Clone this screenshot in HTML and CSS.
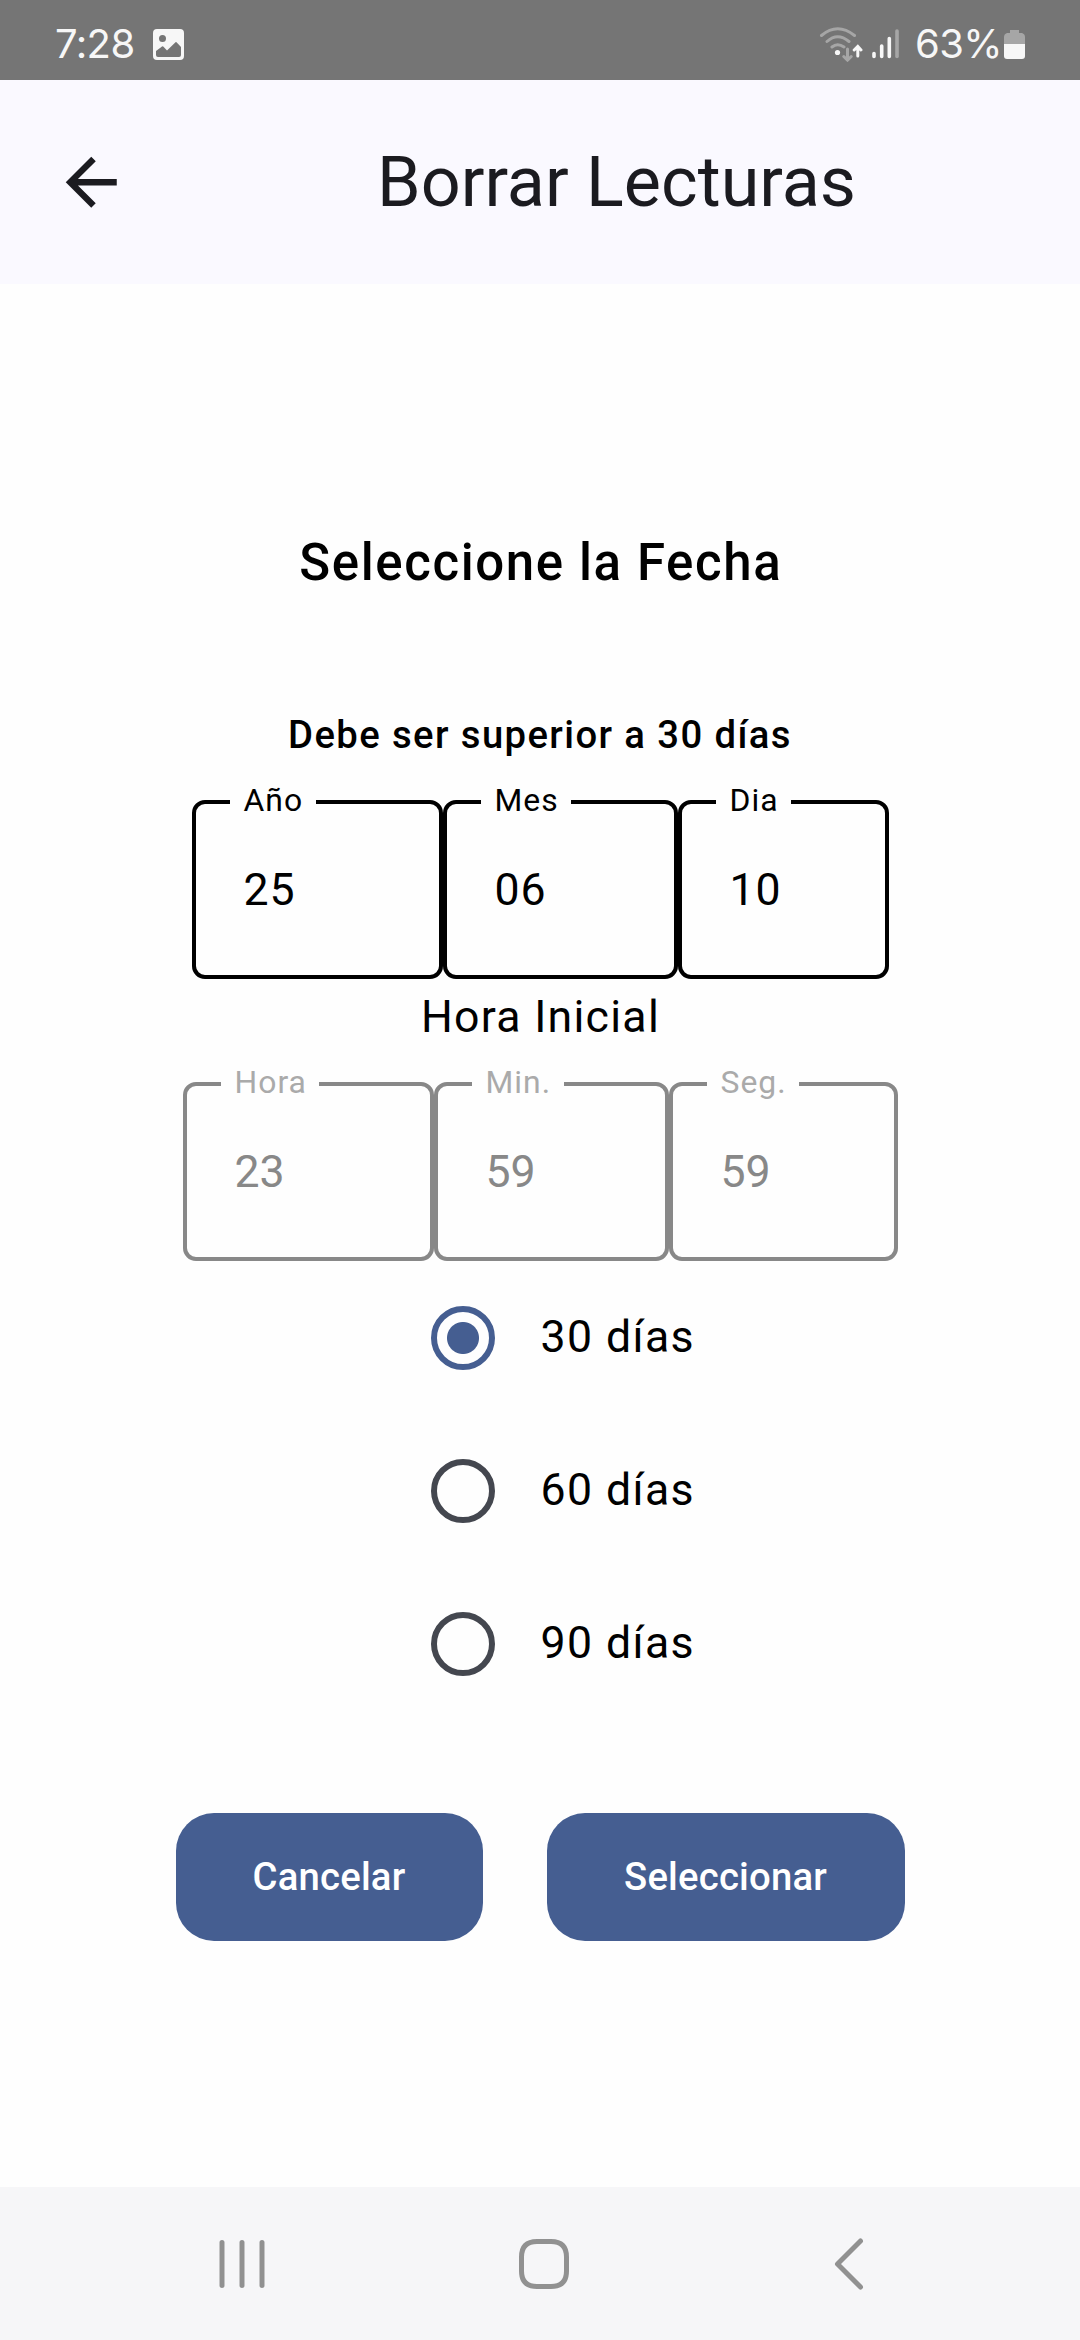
FILE: index.html
```html
<!DOCTYPE html>
<html lang="es">
<head>
<meta charset="utf-8">
<title>Borrar Lecturas</title>
<link rel="stylesheet" href="styles.css">
</head>
<body>
<div class="status">
  <div class="status-left">
    <span class="time">7:28</span>
    <svg width="31" height="31" viewBox="0 0 31 31"><path fill="#f7f7f7" fill-rule="evenodd" d="M4 0H27Q31 0 31 4V27Q31 31 27 31H4Q0 31 0 27V4Q0 0 4 0ZM9.500 6A3.500 3.500 0 1 0 9.500 13A3.500 3.500 0 1 0 9.500 6ZM3 22V26Q3 28 5 28H26Q28 28 28 26V18L23.500 13.300Q23 12.900 22.500 13.300L14 21.500L10.500 17.800Q9.800 17 9 17.600Z"/></svg>
  </div>
  <div class="status-right">
    <svg class="wifi" width="44" height="36" viewBox="0 0 44 36" fill="none" stroke-linecap="round">
      <g stroke="#a6a6a6" stroke-width="3"><path d="M2.500 9.500Q18.500-4 35.500 9.500M8 15.500Q18.500 6 30 15.500M13 21Q18.500 16.500 25 21M28.500 23V34M24.800 30.500L28.500 34.200L32.200 30.500"/></g>
      <circle cx="18.500" cy="26.500" r="2.600" fill="#f7f7f7"/>
      <path stroke="#f7f7f7" stroke-width="3" d="M38.800 30V21M35.200 24L38.800 20.500L42 24"/>
    </svg>
    <svg class="signal" width="27" height="30" viewBox="0 0 27 30" stroke-width="3.600" stroke-linecap="round"><path stroke="#f7f7f7" d="M2 24.500V27.500M9.700 17V27.500M17.300 9.500V27.500"/><path stroke="#a6a6a6" d="M25 2V27.500"/></svg>
    <span class="percent">63%</span>
    <svg class="battery" width="21" height="29" viewBox="0 0 21 29"><path fill="#a6a6a6" d="M6 0H15V3H18Q21 4 21 7V14H0V7Q0 4 3 3H6Z"/><path fill="#f7f7f7" d="M0 14H21V26Q21 29 18 29H3Q0 29 0 26Z"/></svg>
  </div>
</div>
<header class="appbar">
  <svg class="back" viewBox="0 0 24 24"><path fill="#1b1b20" d="M20 11H7.830L13.420 5.410 12 4 4 12 12 20 13.410 18.590 7.830 13H20Z"/></svg>
  <h1 class="title">Borrar Lecturas</h1>
</header>
<main class="content">
  <h2 class="heading">Seleccione la Fecha</h2>
  <p class="hint">Debe ser superior a 30 días</p>
  <div class="fields">
    <div class="field field-lg"><span class="label">Año</span><span class="value">25</span></div>
    <div class="field field-md"><span class="label">Mes</span><span class="value">06</span></div>
    <div class="field field-sm"><span class="label">Dia</span><span class="value">10</span></div>
  </div>
  <p class="subtitle">Hora Inicial</p>
  <div class="fields disabled">
    <div class="field field-lg"><span class="label">Hora</span><span class="value">23</span></div>
    <div class="field field-md"><span class="label">Min.</span><span class="value">59</span></div>
    <div class="field field-end"><span class="label">Seg.</span><span class="value">59</span></div>
  </div>
  <div class="options">
    <div class="option"><span class="radio selected"></span><span class="option-text">30 días</span></div>
    <div class="option"><span class="radio"></span><span class="option-text">60 días</span></div>
    <div class="option"><span class="radio"></span><span class="option-text">90 días</span></div>
  </div>
  <div class="actions">
    <button class="btn cancel">Cancelar</button>
    <button class="btn select">Seleccionar</button>
  </div>
</main>
<nav class="navbar">
  <svg width="46" height="50" viewBox="0 0 46 50" stroke="#919191" stroke-width="5" stroke-linecap="round"><path d="M3 3.500V46.500M23 3.500V46.500M43 3.500V46.500"/></svg>
  <svg class="home" width="50" height="50" viewBox="0 0 50 50" fill="none" stroke="#919191" stroke-width="5"><path d="M18 2.500H32Q47.500 2.500 47.500 18V32Q47.500 47.500 32 47.500H18Q2.500 47.500 2.500 32V18Q2.500 2.500 18 2.500Z"/></svg>
  <svg width="30" height="52" viewBox="0 0 30 52" fill="none" stroke="#919191" stroke-width="5" stroke-linecap="round" stroke-linejoin="round"><path d="M26.500 3L3.500 26L26.500 49"/></svg>
</nav>
</body>
</html>
```

FILE: styles.css
```css
* { box-sizing: border-box; }
body {
  margin: 0;
  width: 1080px;
  height: 2340px;
  display: flex;
  flex-direction: column;
  background: #fefefe;
  color: #000;
  font-family: Roboto, sans-serif;
  overflow: hidden;
}
h1, h2, p { margin: 0; font-weight: 400; }
svg { display: block; flex: none; }

.status {
  height: 80px;
  padding: 8px 55px 0 55px;
  display: flex;
  align-items: center;
  justify-content: space-between;
  background: #757575;
  color: #f7f7f7;
  font-family: Inter, sans-serif;
  font-size: 40px;
  line-height: 72px;
}
.status-left, .status-right { display: flex; align-items: center; }
.time { width: 98px; letter-spacing: -0.6px; }
.signal { margin: 0 16px 0 9px; }
.percent { width: 89px; letter-spacing: -0.6px; }

.appbar {
  height: 204px;
  padding-left: 52.5px;
  display: flex;
  align-items: center;
  background: #faf9ff;
}
.back { width: 76.5px; height: 76.5px; margin-right: 24px; }
.title {
  flex: 1;
  text-align: center;
  font-size: 70.125px;
  line-height: 90px;
  color: #1b1b20;
}

.content {
  flex: 1;
  display: flex;
  flex-direction: column;
  align-items: center;
  padding-top: 240px;
}
.heading {
  padding-left: 1.6px;
  font-size: 51px;
  font-weight: 500;
  line-height: 77px;
  letter-spacing: 1.6px;
}
.hint {
  margin-top: 102px;
  font-size: 38.25px;
  font-weight: 500;
  line-height: 64px;
  letter-spacing: 1.4px;
}
.fields { display: flex; margin-top: 33px; letter-spacing: 1.275px; }
.field {
  position: relative;
  height: 179px;
  padding-left: 48px;
  display: flex;
  align-items: center;
  border: 4px solid #000;
  border-radius: 13px;
}
.field-lg { width: 251px; }
.field-md { width: 235px; }
.field-sm { width: 211px; }
.field-end { width: 229px; }
.label {
  position: absolute;
  left: 34px;
  top: -24px;
  padding: 0 12.5px 0 14px;
  background: #fefefe;
  font-size: 31.875px;
  line-height: 40px;
  letter-spacing: 1px;
}
.value { font-size: 44.625px; line-height: 64px; letter-spacing: 0.9px; }
.subtitle {
  margin-top: 6px;
  padding-left: 1px;
  font-size: 44.625px;
  line-height: 64px;
  letter-spacing: 1.275px;
}
.disabled .field { border-color: #888; }
.disabled .label { color: #aaa; }
.disabled .value { color: #888; letter-spacing: 0; }

.options { align-self: flex-start; margin-left: 431px; }
.option {
  height: 153px;
  display: flex;
  align-items: center;
  gap: 45.5px;
  white-space: nowrap;
  font-size: 44.625px;
  line-height: 64px;
  letter-spacing: 1.4px;
}
.option-text { padding-bottom: 2px; }
.radio {
  width: 64px;
  height: 64px;
  flex: none;
  border: 6.4px solid #44474f;
  border-radius: 50%;
}
.selected {
  border-color: #455e91;
  background: radial-gradient(circle, #455e91 15.500px, transparent 16.500px);
}

.actions { display: flex; gap: 64px; margin-top: 93px; }
.btn {
  height: 128px;
  padding: 0;
  border: 0;
  border-radius: 38px;
  background: #455e91;
  color: #fff;
  font: 500 38.25px/64px Roboto, sans-serif;
  letter-spacing: 0.2px;
}
.cancel { width: 307px; }
.select { width: 358px; }

.navbar {
  height: 153px;
  padding: 0 216px 0 219px;
  display: flex;
  align-items: center;
  justify-content: space-between;
  background: #f6f6f8;
}
.home { margin-right: 11px; }
```
